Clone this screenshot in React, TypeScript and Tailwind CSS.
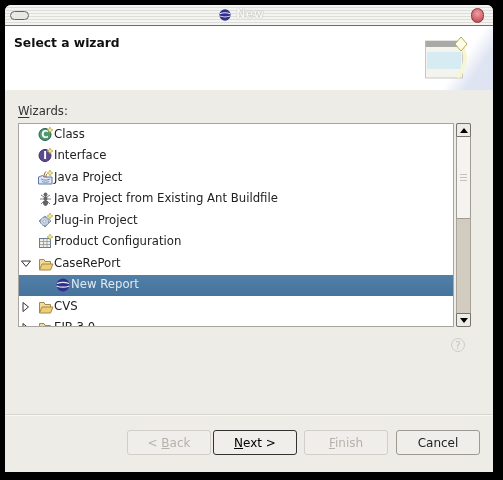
import type { ReactNode } from "react";

function Spark({ x = 11, y = 4 }: { x?: number; y?: number }) {
  return <path d={`M${x} ${y - 3}l1 2 2 1-2 1-1 2-1-2-2-1 2-1z`} fill="#f4e98a" stroke="#a89a3c" strokeWidth="0.6" />;
}

function ClassIcon() {
  return (
    <svg width="16" height="16" viewBox="0 1 16 16">
      <circle cx="7" cy="8.5" r="6" fill="#4a9a72" stroke="#2c5f4a" />
      <text x="7" y="12" textAnchor="middle" fontSize="10" fontWeight="700" fill="#fff" fontFamily="DejaVu Sans">C</text>
      <Spark x={12} y={4} />
    </svg>
  );
}

function InterfaceIcon() {
  return (
    <svg width="16" height="16" viewBox="0 1 16 16">
      <circle cx="7" cy="8.5" r="6" fill="#5b4a8c" stroke="#3d3266" />
      <text x="7" y="12" textAnchor="middle" fontSize="10" fontWeight="700" fill="#fff" fontFamily="DejaVu Sans">I</text>
      <Spark x={12} y={4} />
    </svg>
  );
}

function JavaProjectIcon() {
  return (
    <svg width="16" height="16" viewBox="0 1 16 16">
      <path d="M0.5 15V8l4-1.5 2 1.5h7.5v7z" fill="#dbe5f3" stroke="#6079a8" />
      <path d="M3 10c3 1.5 6 1.5 9 0M4 12.5c2 1 5 1 7 0" stroke="#7a8fb8" fill="none" />
      <path d="M6 8c0-2 .5-4 2-5.5M8 8c0-1 0-2 1-3" stroke="#8a5a2a" fill="none" />
      <Spark x={12} y={4} />
    </svg>
  );
}

function AntIcon() {
  return (
    <svg width="16" height="16" viewBox="0 0 16 16" stroke="#5a5a5a" fill="none">
      <circle cx="7.5" cy="3.5" r="1.5" fill="#666" />
      <ellipse cx="7.5" cy="7.5" rx="1.4" ry="2" fill="#666" />
      <ellipse cx="7.5" cy="12" rx="2" ry="2.4" fill="#666" />
      <path d="M6 6L3 4M9 6l3-2M6 8H2M9 8h4M6 10l-3 3M9 10l3 3" strokeWidth="0.8" />
    </svg>
  );
}

function PluginIcon() {
  return (
    <svg width="16" height="16" viewBox="0 1 16 16">
      <path d="M1 9l6-5 6 5-6 6z" fill="#c2cede" stroke="#7d8fa8" />
      <circle cx="6.5" cy="9.5" r="4" fill="#cdd6e6" stroke="#75869f" strokeDasharray="1.6 0.8" />
      <circle cx="6.5" cy="9.5" r="1.5" fill="#f0f3f8" stroke="#75869f" strokeWidth="0.6" />
      <Spark x={12} y={4} />
    </svg>
  );
}

function ProductIcon() {
  return (
    <svg width="16" height="16" viewBox="0 1 16 16">
      <rect x="1.5" y="5.5" width="11" height="9" fill="#f3efe0" stroke="#6a7a8e" />
      <path d="M1.5 8.5h11M1.5 11.5h11M5.5 5.5v9M9 5.5v9" stroke="#8596a8" strokeWidth="0.8" />
      <Spark x={12} y={4} />
    </svg>
  );
}

function FolderIcon() {
  return (
    <svg width="16" height="16" viewBox="0 0 16 16">
      <path d="M1.5 14V3.5h4.5l1 2h5.5v3" fill="#f3dc9a" stroke="#a08a4e" />
      <path d="M1.5 14l2.5-6h11l-2.5 6z" fill="#f0cd72" stroke="#a08a4e" />
    </svg>
  );
}

function GlobeIcon({ size = 16 }: { size?: number }) {
  return (
    <svg width={size} height={size} viewBox="0 0 16 16">
      <circle cx="8" cy="8" r="6.5" fill="#2f2f8c" />
      <path d="M2 6.5c4-1.5 8-1.5 12 0M1.5 9c4 1.5 9 1.5 13 0" stroke="#e8e8f8" strokeWidth="1.2" fill="none" />
    </svg>
  );
}

function Twisty({ open }: { open?: boolean }) {
  return (
    <svg width="12" height="12" viewBox="0 0 12 12" fill="#fff" stroke="#333">
      {open ? <path d="M1.5 3h9L6 8.5z" /> : <path d="M3 1.5v9L8.5 6z" />}
    </svg>
  );
}

function Row({ label, icon, indent = 19, selected, twisty }: { label: string; icon: ReactNode; indent?: number; selected?: boolean; twisty?: "open" | "closed" }) {
  return (
    <div className={`flex h-[21.5px] shrink-0 items-center ${selected ? "bg-[linear-gradient(180deg,#517fa8,#45739b)] text-[#dfe9f2]" : "text-[#222]"}`}>
      <div className="flex w-[19px] shrink-0 justify-center pr-[5px]">
        {twisty && <Twisty open={twisty === "open"} />}
      </div>
      <div style={{ width: indent - 19 }} className="shrink-0" />
      <div className="w-[16px] shrink-0">{icon}</div>
      <span className="whitespace-nowrap">{label}</span>
    </div>
  );
}

function Button({ children, disabled, focused, className }: { children: ReactNode; disabled?: boolean; focused?: boolean; className?: string }) {
  return (
    <div
      className={`flex h-[25px] w-[84px] items-center justify-center rounded-[3px] border bg-[#f0eeea] text-[12px] ${
        focused ? "border-[#333]" : disabled ? "border-[#d2cfc8] text-[#b5b2ab]" : "border-[#9d9a92] text-[#222]"
      } ${className ?? ""}`}
    >
      {children}
    </div>
  );
}

export default function App() {
  return (
    <div className="h-[480px] w-[503px] bg-black pb-[8px] pl-[5px] pr-[10px] pt-[5px] font-['DejaVu_Sans',sans-serif] text-[11.7px] blur-[0.4px]">
      <div className="flex h-full flex-col overflow-hidden rounded-t-[6px] bg-[#eeece7]">
        {/* Title bar */}
        <div className="flex h-[21px] shrink-0 items-center justify-between border-b border-[#6b6b68] bg-[repeating-linear-gradient(180deg,#f4f4f2_0px,#f4f4f2_2px,#deded8_2px,#deded8_3px)] pl-[5px] pr-[9px]">
          <div className="h-[9px] w-[19px] rounded-full border border-[#666] bg-[#e8e8e6]" />
          <div className="flex items-center gap-[4px] pr-[18px]">
            <GlobeIcon size={14} />
            <span className="text-[11.5px] font-bold text-[#f4f4f2] [text-shadow:0_0_1px_#888]">New</span>
          </div>
          <div className="h-[15px] w-[13px] rounded-full border border-[#8a3a3a] bg-[radial-gradient(circle_at_50%_35%,#f0a0a4,#b83c44)]" />
        </div>

        {/* Header */}
        <div className="flex h-[64px] shrink-0 items-start justify-between bg-white pl-[9px]">
          <div className="mt-[9px] text-[12.3px] font-bold leading-[16px] text-[#111]">Select a wizard</div>
          <div className="flex h-full w-[70px] items-start bg-[linear-gradient(125deg,#ffffff_55%,#dfe4f2_75%)] pl-[1px] pt-[7px]">
            <svg width="50" height="46" viewBox="0 0 50 46">
              <rect x="1.5" y="8" width="37" height="37" fill="#f4f3ee" stroke="#c8c8c0" />
              <rect x="1.5" y="8" width="33" height="6" fill="#a9a9a6" />
              <rect x="3" y="19" width="34" height="17" fill="#d6ecf2" />
              <path d="M39 14c4 10 2 24-6 30" stroke="#f6f6d4" strokeWidth="4" fill="none" />
              <path d="M37 4l6 7-6 7-6-7z" fill="#fffde8" stroke="#b5ad55" />
            </svg>
          </div>
        </div>

        {/* Body */}
        <div className="flex flex-1 flex-col border-b border-[#d8d6d0] pl-[13px] pr-[22px] pt-[14px]">
          <div className="leading-[15px] text-[#333]">
            <span className="underline underline-offset-2">W</span>izards:
          </div>
          <div className="mt-[4px] flex h-[204px] gap-[2px]">
            <div className="flex flex-1 flex-col overflow-hidden border border-[#a8a59e] bg-white">
              <Row label="Class" icon={<ClassIcon />} />
              <Row label="Interface" icon={<InterfaceIcon />} />
              <Row label="Java Project" icon={<JavaProjectIcon />} />
              <Row label="Java Project from Existing Ant Buildfile" icon={<AntIcon />} />
              <Row label="Plug-in Project" icon={<PluginIcon />} />
              <Row label="Product Configuration" icon={<ProductIcon />} />
              <Row label="CaseRePort" icon={<FolderIcon />} twisty="open" />
              <Row label="New Report" icon={<GlobeIcon />} indent={36} selected />
              <Row label="CVS" icon={<FolderIcon />} twisty="closed" />
              <Row label="EJB 3.0" icon={<FolderIcon />} twisty="closed" />
            </div>
            {/* Scrollbar */}
            <div className="flex w-[15px] shrink-0 flex-col bg-[#d2cbc0]">
              <div className="flex h-[14px] items-center justify-center rounded-t-[2px] border border-[#77746c] bg-[#eeece8]">
                <div className="h-0 w-0 border-x-[4px] border-b-[5px] border-x-transparent border-b-black" />
              </div>
              <div className="flex h-[82px] flex-col items-center justify-center gap-[2px] border-x border-b border-[#a09c94] bg-[#f4f3f0]">
                <div className="h-px w-[7px] bg-[#c4c1ba]" />
                <div className="h-px w-[7px] bg-[#c4c1ba]" />
                <div className="h-px w-[7px] bg-[#c4c1ba]" />
              </div>
              <div className="flex-1 border-x border-[#a8a297]" />
              <div className="flex h-[14px] items-center justify-center rounded-b-[2px] border border-[#77746c] bg-[#eeece8]">
                <div className="h-0 w-0 border-x-[4px] border-t-[5px] border-x-transparent border-t-black" />
              </div>
            </div>
          </div>
          <div className="mt-[11px] flex justify-end pr-[6px]">
            <div className="flex h-[14px] w-[14px] items-center justify-center rounded-full border border-[#cfccc6] text-[10px] text-[#c4c1ba]">?</div>
          </div>
        </div>

        {/* Buttons */}
        <div className="flex h-[57px] shrink-0 items-start justify-end gap-[7px] border-t border-[#f8f7f4] pr-[13px] pt-[14px]">
          <Button disabled className="mr-[-5px]">
            <span>&lt; <span className="underline">B</span>ack</span>
          </Button>
          <Button focused>
            <span><span className="underline">N</span>ext &gt;</span>
          </Button>
          <Button disabled>
            <span><span className="underline">F</span>inish</span>
          </Button>
          <Button className="ml-[1px]">Cancel</Button>
        </div>
      </div>
    </div>
  );
}
